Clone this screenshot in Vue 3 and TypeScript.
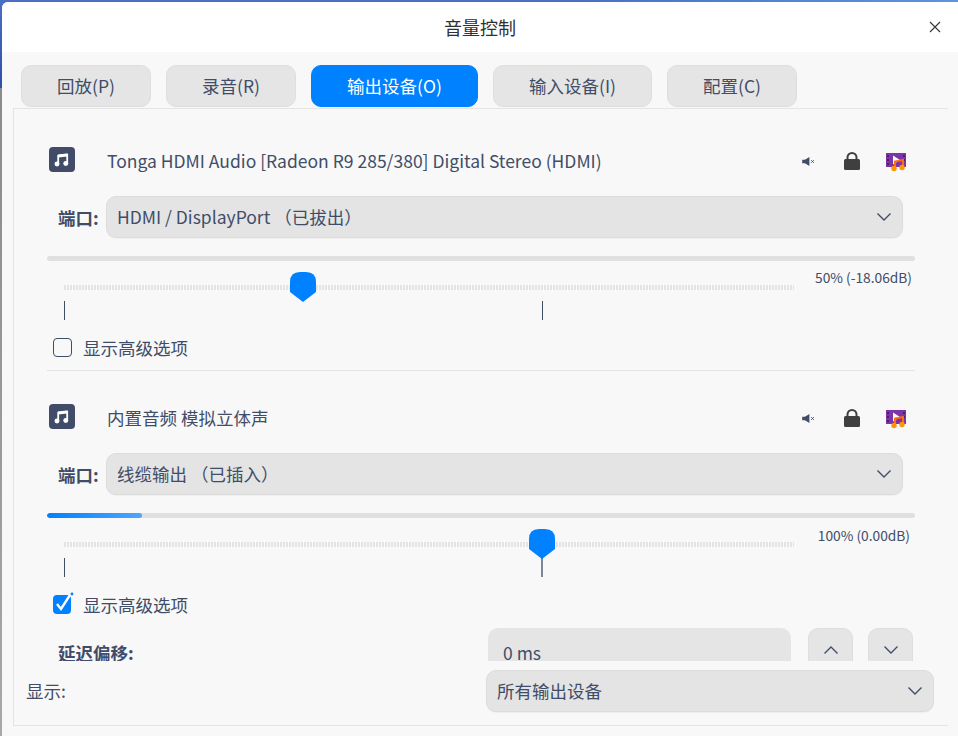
<script setup lang="ts">
interface Device {
  name: string
  port: string
  percent: string
  level: number
  value: number
  advanced: boolean
}
const tabs = [
  { label: '回放(P)', width: 130 },
  { label: '录音(R)', width: 130 },
  { label: '输出设备(O)', width: 167, active: true },
  { label: '输入设备(I)', width: 159 },
  { label: '配置(C)', width: 130 },
]
const devices: Device[] = [
  { name: 'Tonga HDMI Audio [Radeon R9 285/380] Digital Stereo (HDMI)', port: 'HDMI / DisplayPort （已拔出）', percent: '50% (-18.06dB)', level: 0, value: 32.75, advanced: false },
  { name: '内置音频 模拟立体声', port: '线缆输出 （已插入）', percent: '100% (0.00dB)', level: 11, value: 65.5, advanced: true },
]
</script>

<template>
  <div class="desktop">
    <div class="window">
      <header class="titlebar">
        <span class="title">音量控制</span>
        <svg class="close" width="12" height="12" viewBox="0 0 12 12"><path d="M1 1l10 10M11 1L1 11" stroke="#3a3a3a" stroke-width="1.2" fill="none" /></svg>
      </header>
      <nav class="tabs">
        <button v-for="t in tabs" :key="t.label" class="tab" :class="{ active: t.active }" :style="{ width: t.width + 'px' }">{{ t.label }}</button>
      </nav>
      <main class="pane">
        <div class="scroller">
          <section v-for="(d, i) in devices" :key="d.name" class="device" :class="{ later: i > 0 }">
            <div class="head">
              <svg class="note" width="26" height="25" viewBox="0 0 26 25">
                <rect width="26" height="25" rx="4" fill="#414d68" />
                <path d="M9.2 17V8.8L18.2 7.6V16.5" fill="none" stroke="#fff" stroke-width="1.8" />
                <path d="M9 9L18 8" fill="none" stroke="#fff" stroke-width="3" />
                <ellipse cx="8" cy="17" rx="2.5" ry="2.4" fill="#fff" />
                <ellipse cx="16.8" cy="16.5" rx="2.5" ry="2.4" fill="#fff" />
              </svg>
              <span class="name">{{ d.name }}</span>
              <svg class="mute" width="13" height="9" viewBox="0 0 14 10">
                <path d="M0 3h3l5-3v10L3 7H0z" fill="#414d68" />
                <path d="M10 3.5l3 3M13 3.5l-3 3" stroke="#414d68" stroke-width="1" />
              </svg>
              <svg class="lock" width="16" height="18" viewBox="0 0 16 18">
                <path d="M3.5 8V5.5a4.5 4.5 0 0 1 9 0V8" fill="none" stroke="#3f3f3f" stroke-width="2" />
                <rect y="7" width="16" height="11" rx="1.5" fill="#3f3f3f" />
              </svg>
              <svg class="app" width="21" height="19" viewBox="0 0 21 19">
                <rect y="0" width="20" height="14" fill="#7d35a6" />
                <path d="M1 2h2v2H1zM1 6h2v2H1zM1 10h2v2H1zM17 2h2v2h-2zM17 6h2v2h-2z" fill="#4f1c6e" />
                <path d="M7 2.5l7 4.5-7 4.5z" fill="#fff" />
                <path d="M9 15V8.5l8-1.5v6.5" fill="none" stroke="#ff6a13" stroke-width="2" />
                <circle cx="8" cy="15.5" r="2.7" fill="#ff9500" />
                <circle cx="16" cy="14.5" r="2.7" fill="#ff9500" />
              </svg>
            </div>
            <div class="port">
              <label class="port-label">端口:</label>
              <div class="combo port-combo">
                <span>{{ d.port }}</span>
                <svg class="chev" width="16" height="10" viewBox="0 0 16 10"><path d="M1.5 1.5L8 8l6.5-6.5" fill="none" stroke="#414d68" stroke-width="1.4" /></svg>
              </div>
            </div>
            <div class="meter"><div class="meter-fill" :style="{ width: d.level + '%' }"></div></div>
            <div class="slider">
              <div class="track">
                <svg class="thumb" :style="{ left: d.value + '%' }" width="26" height="30" viewBox="0 0 26 30">
                  <path d="M0 10Q0 0 10 0H16Q26 0 26 10V20L13 30L0 20Z" fill="#0081ff" />
                </svg>
              </div>
              <span class="tick tick-min"></span>
              <span class="tick tick-max" :class="{ under: d.advanced }"></span>
              <span class="percent" :class="{ full: d.advanced }">{{ d.percent }}</span>
            </div>
            <div class="check-row">
              <span v-if="!d.advanced" class="box"></span>
              <svg v-else class="box-on" width="22" height="23" viewBox="0 0 22 23">
                <rect x="1" y="3" width="18" height="19" rx="4" fill="#0081ff" />
                <path d="M5 12l4 5 9-14" fill="none" stroke="#fff" stroke-width="2.4" />
                <circle cx="20" cy="2" r="1.4" fill="#0081ff" />
              </svg>
              <span class="check-label">显示高级选项</span>
            </div>
            <div v-if="!d.advanced" class="divider"></div>
            <div v-else class="latency">
              <label class="latency-label">延迟偏移:</label>
              <div class="field">0 ms</div>
              <button class="step">
                <svg width="16" height="10" viewBox="0 0 16 10"><path d="M1.5 8.5L8 2l6.5 6.5" fill="none" stroke="#414d68" stroke-width="1.4" /></svg>
              </button>
              <button class="step">
                <svg width="16" height="10" viewBox="0 0 16 10"><path d="M1.5 1.5L8 8l6.5-6.5" fill="none" stroke="#414d68" stroke-width="1.4" /></svg>
              </button>
            </div>
          </section>
        </div>
        <footer class="footer">
          <span class="show">显示:</span>
          <div class="combo footer-combo">
            <span>所有输出设备</span>
            <svg class="chev" width="16" height="10" viewBox="0 0 16 10"><path d="M1.5 1.5L8 8l6.5-6.5" fill="none" stroke="#414d68" stroke-width="1.4" /></svg>
          </div>
        </footer>
      </main>
    </div>
  </div>
</template>

<style>
html, body { margin: 0; padding: 0; background: #9a9a9a; }
</style>

<style scoped>
.desktop {
  width: 958px;
  height: 736px;
  overflow: hidden;
  padding: 2px 0 0 2px;
  box-sizing: border-box;
  background:
    linear-gradient(90deg, #4a6fc4 0, #4a6fc4 60%, #5f93dc 100%) 0 0 / 100% 2px no-repeat,
    linear-gradient(180deg, #4a6fc4 0, #2f4fa8 88px, #8a8a8a 88px, #a8a8a8 100%);
  font-family: "Noto Sans CJK SC", "Noto Sans", sans-serif;
  color: #414d68;
  font-size: 17.5px;
}
.window {
  height: 734px;
  background: #f8f8f8;
  border-top-left-radius: 6px;
  overflow: hidden;
}
.titlebar {
  height: 50px;
  background: #fff;
  display: flex;
  align-items: center;
  justify-content: center;
  position: relative;
}
.title { font-size: 18px; color: #303030; }
.close { position: absolute; right: 17px; top: 19px; }
.tabs {
  display: flex;
  gap: 15px;
  padding: 13px 0 0 19px;
  height: 43px;
}
.tab {
  height: 42px;
  box-sizing: border-box;
  border: 1.5px solid #dedede;
  border-radius: 10px;
  background: #e5e5e5;
  color: #414d68;
  font: inherit;
  padding: 0 0 2px;
}
.tab.active { background: #0081ff; border-color: #0081ff; color: #fff; }
.pane {
  margin: 0 10px 0 11px;
  border: solid #e4e4e4;
  border-width: 1px 0 1px 1px;
  height: 616px;
  display: flex;
  flex-direction: column;
}
.scroller {
  height: 552px;
  overflow: hidden;
  padding: 0 33px;
  flex: none;
}
.device { padding-top: 32px; }
.device.later { padding-top: 27px; }
.head { display: flex; align-items: center; height: 40px; }
.note { margin: -3px 0 0 2px; }
.name { margin-left: 32px; flex: 1; line-height: 39px; height: 40px; }
.mute { margin-right: 29px; }
.lock { margin: -1px 26px 0 0; }
.app { margin: 2px 8px 0 0; }
.port {
  display: flex;
  align-items: center;
  margin-top: 15px;
  margin-left: 11px;
  margin-right: 12px;
}
.port-label { width: 48px; font-weight: 700; flex: none; }
.combo {
  height: 42px;
  box-sizing: border-box;
  border: 1.5px solid #dcdcdc;
  border-radius: 10px;
  background: #e4e4e4;
  display: flex;
  align-items: center;
  justify-content: space-between;
  padding: 0 10px 1px;
  box-shadow: 0 1px 1px rgba(0, 0, 0, 0.04);
}
.port-combo { flex: 1; }
.meter { height: 5px; margin-top: 18px; background: #e0e0e0; border-radius: 3px; overflow: hidden; }
.meter-fill { height: 100%; background: linear-gradient(90deg, #0081ff, #4ea6ff); border-radius: 3px; }
.slider { position: relative; height: 59px; margin: 0 0 0 17px; }
.track {
  position: absolute;
  left: 0;
  top: 24px;
  width: 730px;
  height: 5px;
  background: repeating-linear-gradient(90deg, #e4e4e4 0 2px, #f8f8f8 2px 3px);
}
.tick { position: absolute; top: 40px; width: 1px; height: 19px; background: #414d68; }
.tick-min { left: 0; }
.tick-max { left: 478px; }
.tick-max.under { background: #7f8599; width: 2px; left: 477px; top: 36px; height: 23px; }
.thumb { position: absolute; top: -13px; margin-left: -13px; z-index: 1; }
.percent { position: absolute; right: 3px; top: 7px; font-size: 13.75px; line-height: 18px; }
.percent.full { right: 5px; top: 8px; }
.check-row { display: flex; align-items: center; height: 26px; margin-top: 15px; position: relative; padding-left: 36px; }
.check-label { line-height: 26px; height: 26px; }
.box {
  position: absolute;
  left: 6px;
  top: 3px;
  width: 19px;
  height: 19px;
  box-sizing: border-box;
  border: 1.5px solid #414d68;
  border-radius: 4px;
}
.box-on { position: absolute; left: 5px; top: 0; }
.divider { height: 1px; background: #e4e4e4; margin-top: 9px; }
.latency { display: flex; margin-top: 10px; align-items: flex-start; }
.latency-label { width: 430px; font-weight: 700; line-height: 50px; margin-left: 11px; flex: none; }
.field {
  width: 303px;
  height: 50px;
  line-height: 50px;
  flex: none;
  box-sizing: border-box;
  padding-left: 15px;
  background: #e5e5e5;
  border-radius: 10px;
}
.step {
  width: 45px;
  height: 50px;
  box-sizing: border-box;
  border: 1.5px solid #dedede;
  border-radius: 10px;
  background: #e5e5e5;
  padding: 0 0 6px;
  flex: none;
  display: flex;
  align-items: center;
  justify-content: center;
}
.field + .step { margin-left: 17px; }
.step + .step { margin-left: 15px; }
.footer {
  display: flex;
  align-items: center;
  justify-content: space-between;
  padding: 0 14px 4px 12px;
  height: 64px;
  box-sizing: border-box;
  flex: none;
}
.footer-combo { width: 448px; }
.show { line-height: 42px; }
</style>
